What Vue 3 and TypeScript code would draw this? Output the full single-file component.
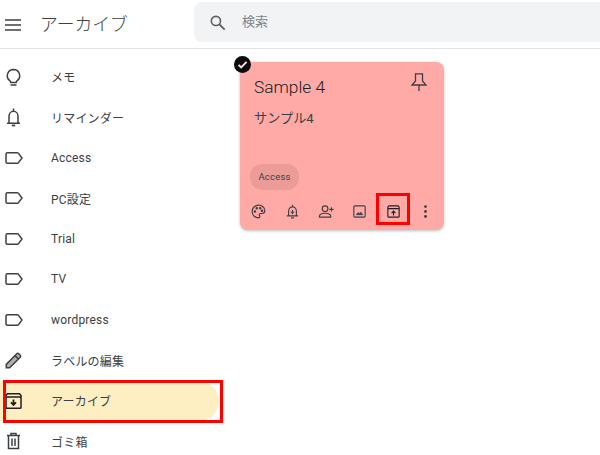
<script setup lang="ts">
const items = [
  { text: 'メモ', icon: 'bulb' },
  { text: 'リマインダー', icon: 'bell' },
  { text: 'Access', icon: 'label' },
  { text: 'PC設定', icon: 'label' },
  { text: 'Trial', icon: 'label' },
  { text: 'TV', icon: 'label' },
  { text: 'wordpress', icon: 'label' },
  { text: 'ラベルの編集', icon: 'pencil' },
  { text: 'アーカイブ', icon: 'archive', active: true },
  { text: 'ゴミ箱', icon: 'trash' },
]
</script>

<template>
  <div class="page">
    <header class="header">
      <svg class="menu" viewBox="0 0 16 12" width="16" height="12"><path d="M0 1h16M0 6h16M0 11h16" stroke="#3c4043" stroke-width="1.400" fill="none" /></svg>
      <h1 class="title">アーカイブ</h1>
      <div class="search">
        <svg class="search-icon" viewBox="0 0 24 24" width="20" height="20"><circle cx="9.500" cy="9.500" r="5.500" fill="none" stroke="#5f6368" stroke-width="2" /><path d="M13.500 13.500L20 20" stroke="#5f6368" stroke-width="2.200" /></svg>
        <span class="search-text">検索</span>
      </div>
    </header>
    <div class="body">
      <nav class="side">
        <div v-for="item in items" :key="item.text" class="row" :class="{ active: item.active }">
          <svg class="row-icon" viewBox="0 0 24 24" width="24" height="24" fill="none" stroke="#3c4043" stroke-width="1.500">
            <path v-if="item.icon === 'label'" d="M5.500 6.800h9.800c.5 0 .9.200 1.200.6L20 12l-3.500 4.600c-.3.400-.7.600-1.200.6H5.500c-.8 0-1.500-.7-1.500-1.500V8.300c0-.8.700-1.500 1.500-1.500z" />
            <template v-else-if="item.icon === 'bulb'">
              <path d="M11.500 4.500a6.200 6.200 0 0 0-3.500 11.300c.5.400.8.800.8 1.300v.4h5.400v-.4c0-.5.300-.9.800-1.300A6.200 6.200 0 0 0 11.500 4.500z" />
              <path d="M8.500 20h6" />
            </template>
            <template v-else-if="item.icon === 'bell'">
              <path d="M7 18v-6.500a4.500 5.200 0 0 1 9 0V18M5 18.200h13M11.500 3.500v3" />
              <path d="M9.800 20.500h3.400" stroke-width="1.700" />
            </template>
            <template v-else-if="item.icon === 'pencil'">
              <path d="M4.300 19.700v-3.300L14.800 5.800c.6-.6 1.400-.6 2 0l1.400 1.400c.6.600.6 1.400 0 2L7.600 19.700H4.300z" fill="#5f6368" fill-opacity="0.5" />
              <path d="M13 7.600l3.400 3.400" />
            </template>
            <template v-else-if="item.icon === 'archive'">
              <path d="M5.500 4.800h12l1.500 1.700v12c0 .5-.4.800-.8.800H4.800c-.4 0-.8-.3-.8-.8v-12l1.500-1.700zM4 8h15" stroke="#202124" />
              <path d="M11.500 10.500v5M9 13.300l2.500 2.600 2.500-2.600" stroke="#202124" stroke-width="1.800" />
            </template>
            <template v-else-if="item.icon === 'trash'">
              <path d="M6.500 6.500v13h10v-13M5 6.500h13M9 6V4.500h5V6M10 9.500v7.500M13 9.500v7.500" />
            </template>
          </svg>
          <span class="row-text">{{ item.text }}</span>
        </div>
        <div class="frame side-frame"></div>
      </nav>
      <main class="main">
        <article class="note">
          <span class="check">
            <svg viewBox="0 0 16 16" width="17" height="17"><circle cx="8" cy="8" r="8" fill="#0b0b0d" /><path d="M4.300 8.300l2.500 2.500 5-5.200" fill="none" stroke="#ffe3d8" stroke-width="1.800" /></svg>
          </span>
          <div class="note-head">
            <span class="note-title">Sample 4</span>
            <svg class="pin" viewBox="0 0 24 24" width="24" height="24" fill="none" stroke="#3c4043" stroke-width="1.300"><path d="M8.500 3.800h7v7.200l3.500 4H5l3.500-4zM12 15v6" /></svg>
          </div>
          <p class="note-body">サンプル4</p>
          <span class="chip">Access</span>
          <div class="tools">
            <svg viewBox="0 0 24 24" width="17" height="17" fill="none" stroke="#3c4043" stroke-width="1.600"><path d="M12 3a9 9 0 1 0 0 18c1.500 0 2-1 2-1.800 0-1.200-1-1.500-1-2.700 0-1 .8-1.700 1.800-1.700H17c2.300 0 4-1.600 4-3.800C21 6.500 17 3 12 3z" /><circle cx="7" cy="12" r="1" fill="#3c4043" /><circle cx="9.500" cy="7.500" r="1" fill="#3c4043" /><circle cx="14.500" cy="7.500" r="1" fill="#3c4043" /><circle cx="17" cy="11" r="1" fill="#3c4043" /></svg>
            <svg viewBox="0 0 24 24" width="17" height="17" fill="none" stroke="#3c4043" stroke-width="1.600"><path d="M6.500 18v-6.500a5.500 6 0 0 1 11 0V18M4 18.200h16M12 2.500v3M10 21h4M12 10v6M9.500 13h5" /></svg>
            <svg viewBox="0 0 24 24" width="17" height="17" fill="none" stroke="#3c4043" stroke-width="1.600"><circle cx="10" cy="8" r="4" /><path d="M2 20v-1c0-3 4-4.500 8-4.500s8 1.500 8 4.500v1H2zM19 6v6M16 9h6" /></svg>
            <svg viewBox="0 0 24 24" width="17" height="17" fill="none" stroke="#3c4043" stroke-width="1.600"><rect x="4" y="4" width="16" height="16" rx="1.500" /><path d="M7.500 16.500l2.800-3.200 1.800 2 1.900-2.300 2.500 3.500H7.500z" fill="#3c4043" stroke-width="1" /></svg>
            <svg viewBox="0 0 24 24" width="17" height="17" fill="none" stroke="#202124" stroke-width="1.600"><path d="M5.500 4h13l1.500 1.800v13.400c0 .5-.4.800-.8.800H4.800c-.4 0-.8-.3-.8-.8V5.800L5.500 4zM4 8h16M12 17.500v-6M9.300 14.200l2.700-2.700 2.700 2.700" /></svg>
            <svg class="dots" viewBox="0 0 24 24" width="17" height="17"><circle cx="12" cy="5" r="2" fill="#3c4043" /><circle cx="12" cy="12" r="2" fill="#3c4043" /><circle cx="12" cy="19" r="2" fill="#3c4043" /></svg>
          </div>
          <div class="frame tool-frame"></div>
        </article>
      </main>
    </div>
  </div>
</template>

<style scoped>
.page {
  width: 600px;
  height: 455px;
  overflow: hidden;
  background: #fff;
  font-family: Roboto, "Noto Sans CJK JP", sans-serif;
  color: #3c4043;
}
.header {
  height: 48px;
  display: flex;
  align-items: center;
  border-bottom: 1px solid #e3e4e6;
  padding-left: 5px;
}
.menu { flex: none; margin-top: 1px; }
.title {
  margin: 0 0 2px 19px;
  width: 154px;
  font-weight: 300;
  font-size: 17.800px;
  color: #3c4043;
}
.search {
  flex: 1;
  height: 40px;
  margin-top: -4px;
  margin-right: -10px;
  border-radius: 8px;
  background: #f1f3f4;
  display: flex;
  align-items: center;
  padding-left: 14px;
  gap: 14px;
}
.search-icon { margin-top: 1px; }
.search-text { font-size: 13px; color: #80868b; margin-bottom: 3px; }
.body { display: flex; }
.side {
  position: relative;
  width: 240px;
  flex: none;
  padding-top: 7.500px;
}
.row {
  width: 219px;
  height: 40.500px;
  display: flex;
  align-items: center;
  padding-left: 2px;
  border-radius: 0 21px 21px 0;
  box-sizing: border-box;
}
.row.active { background: #feefc3; }
.row-icon { flex: none; }
.row-text {
  margin-left: 25px;
  font-size: 12px;
  letter-spacing: 0.2px;
  color: #3c4043;
}
.frame {
  position: absolute;
  border: 3px solid #ff0000;
  box-sizing: border-box;
  pointer-events: none;
}
.side-frame { left: 3px; top: 331px; width: 220px; height: 43px; }
.main { flex: 1; padding-top: 13px; }
.note {
  position: relative;
  width: 204px;
  height: 168px;
  box-sizing: border-box;
  background: #ffaaa6;
  border-radius: 8px;
  box-shadow: 0 1px 3px rgba(60, 64, 67, 0.35);
  padding: 14px 13px 0 14px;
}
.check { position: absolute; left: -6px; top: -6px; width: 17px; height: 17px; }
.check svg { display: block; }
.note-head {
  display: flex;
  justify-content: space-between;
  align-items: flex-start;
  height: 22px;
}
.pin { margin-top: -6px; flex: none; }
.note-title { font-size: 17.300px; font-weight: 300; line-height: 22px; color: #202124; }
.note-body { margin: 11px 0 0; font-size: 13.200px; line-height: 20px; color: #3c4043; }
.chip {
  display: inline-block;
  margin: 35px 0 0 -4px;
  width: 49px;
  height: 26px;
  line-height: 26px;
  text-align: center;
  border-radius: 12px;
  background: rgba(0, 0, 0, 0.08);
  font-size: 9.500px;
  letter-spacing: 0.2px;
  color: #3c4043;
}
.tools {
  position: absolute;
  left: 10px;
  top: 140.500px;
  display: flex;
  gap: 16.800px;
}
.tools svg { display: block; flex: none; }
.tools .dots { margin-left: -2px; }
.tool-frame { left: 136px; top: 131px; width: 34px; height: 32px; }
</style>
